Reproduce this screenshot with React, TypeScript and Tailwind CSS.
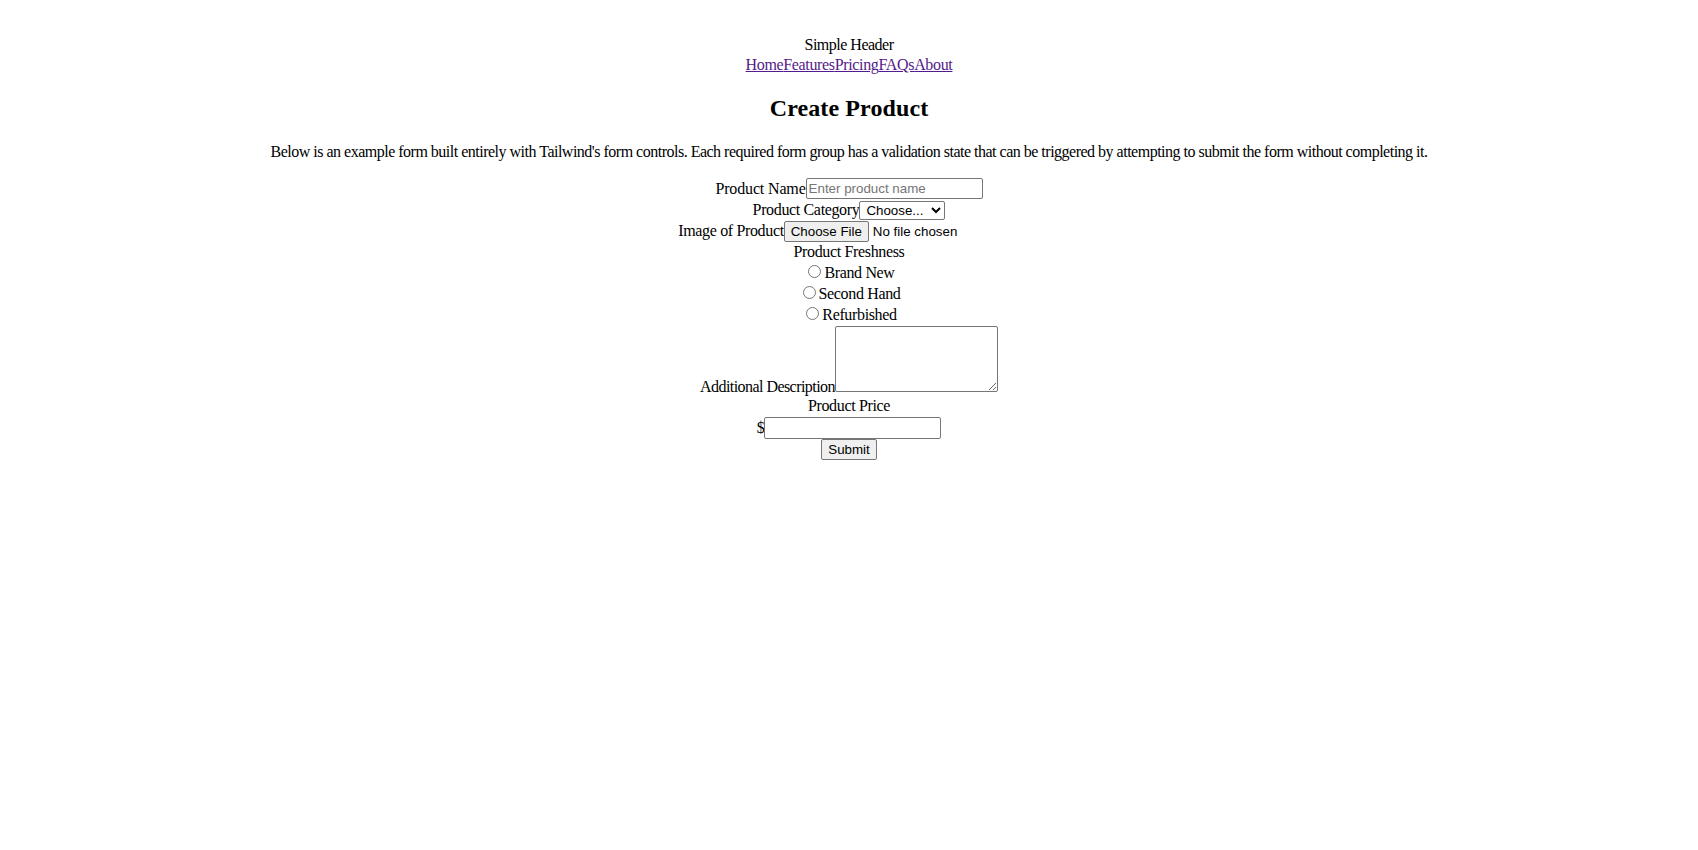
import React from "react";

const navLinks = ["Home", "Features", "Pricing", "FAQs", "About"];

const freshness = ["Brand New", "Second Hand", "Refurbished"];

const control =
  "border border-[#767676] rounded-[2px] bg-white px-[2px] text-[13.33px] tracking-normal font-['Liberation_Sans',Arial,sans-serif] text-black";

export default function App() {
  return (
    <div className="min-h-[850px] bg-white text-black text-[16px] leading-[20px] tracking-[-0.35px] font-['Liberation_Serif','Times_New_Roman',serif] text-center pt-[35px]">
      {/* header */}
      <header>
        <div className="h-[20px] tracking-[-0.5px]">Simple Header</div>
        <nav className="h-[20px] flex justify-center">
          {navLinks.map((l) => (
            <a key={l} href="#" className="text-[#551a8b] underline">
              {l}
            </a>
          ))}
        </nav>
      </header>

      <h2 className="mt-[19px] text-[24px] leading-[28px] font-bold tracking-[0.1px]">Create Product</h2>
      <p className="mt-[20px] h-[20px] tracking-[-0.5px]">
        Below is an example form built entirely with Tailwind's form controls. Each required form group has a validation state that can be triggered by attempting to submit the form without completing it.
      </p>

      <form className="mt-[15px] flex flex-col items-center" onSubmit={(e) => e.preventDefault()}>
        {/* name */}
        <div className="h-[23px] flex items-center justify-center">
          <label htmlFor="name" className="tracking-[-0.15px]">Product Name</label>
          <input
            id="name"
            type="text"
            placeholder="Enter product name"
            className={`${control} w-[177px] h-[21px] placeholder:text-[#757575]`}
          />
        </div>

        {/* category */}
        <div className="h-[20px] flex items-center justify-center">
          <label htmlFor="cat">Product Category</label>
          <select id="cat" className={`${control} w-[86px] h-[19px] px-0`}>
            <option>Choose...</option>
            <option>Electronics</option>
            <option>Clothing</option>
          </select>
        </div>

        {/* image */}
        <div className="h-[22px] flex items-center justify-center">
          <label htmlFor="img">Image of Product</label>
          <input
            id="img"
            type="file"
            className="w-[236px] h-[21px] text-left text-[13.33px] tracking-normal font-['Liberation_Sans',Arial,sans-serif] file:h-[21px] file:mr-[4px] file:px-[6px] file:border file:border-[#767676] file:rounded-[2px] file:bg-[#efefef] file:text-black"
          />
        </div>

        {/* freshness */}
        <div className="h-[20px]">Product Freshness</div>
        {freshness.map((f) => (
          <div key={f} className="h-[21px] flex items-center justify-center">
            <input type="radio" name="fresh" id={f} className="ml-[5px] mr-[3px] mb-[3px] w-[13px] h-[13px]" />
            <label htmlFor={f}>{f}</label>
          </div>
        ))}

        {/* description */}
        <div className="h-[71px] flex items-end justify-center">
          <label htmlFor="desc" className="leading-[18px] tracking-[-0.55px]">Additional Description</label>
          <textarea id="desc" rows={4} className={`${control} w-[163px] h-[66px] mb-[4px] resize`} />
        </div>

        {/* price */}
        <div className="h-[20px]">Product Price</div>
        <div className="h-[23px] flex items-center justify-center">
          <span>$</span>
          <input type="text" className={`${control} w-[177px] h-[22px]`} />
        </div>

        <div className="h-[21px] flex items-center justify-center">
          <button
            type="submit"
            className="h-[21px] px-[6px] border border-[#767676] rounded-[2px] bg-[#efefef] text-[13.33px] tracking-normal font-['Liberation_Sans',Arial,sans-serif]"
          >
            Submit
          </button>
        </div>
      </form>
    </div>
  );
}
